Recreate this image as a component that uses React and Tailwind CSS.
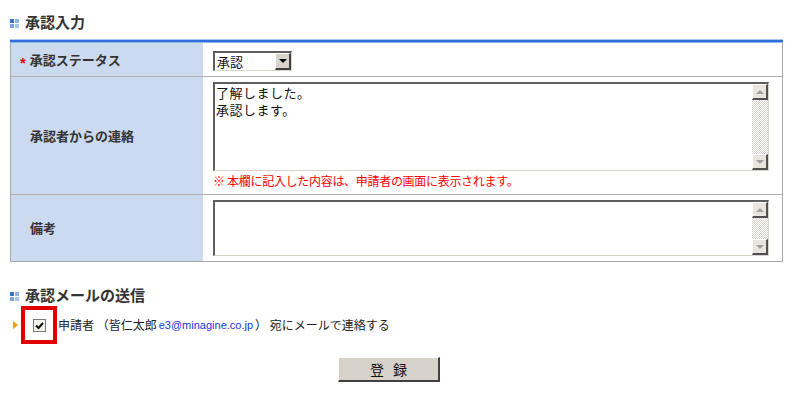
import React from "react";

function TitleIcon() {
  return (
    <div className="grid grid-cols-[4px_4px] grid-rows-[4px_4px] gap-[1px] w-[9px] h-[9px] mt-[2px]">
      <div className="bg-[#3572c4]" />
      <div className="bg-[#8fb4e2]" />
      <div className="bg-[#7aa5da]" />
      <div className="bg-[#a8c6ea]" />
    </div>
  );
}

function ScrollBtn({ up }) {
  return (
    <div className="w-[16px] h-[16px] shrink-0 bg-[#e8e5de] border-t border-l border-t-white border-l-white border-b-2 border-r-2 border-b-[#505050] border-r-[#505050] flex items-center justify-center">
      {up ? (
        <div className="w-0 h-0 border-x-[4px] border-x-transparent border-b-[4px] border-b-[#a0a0a0]" />
      ) : (
        <div className="w-0 h-0 border-x-[4px] border-x-transparent border-t-[4px] border-t-[#a0a0a0]" />
      )}
    </div>
  );
}

function Scrollbar() {
  return (
    <div className="flex flex-col w-[16px] h-full shrink-0">
      <ScrollBtn up />
      <div className="flex-1 bg-[repeating-conic-gradient(#d8d5ce_0%_25%,#ffffff_0%_50%)] bg-[length:2px_2px]" />
      <ScrollBtn />
    </div>
  );
}

function FakeTextarea({ h, text }) {
  return (
    <div
      className={`flex w-[556px] ${h} bg-white border-t-2 border-l-2 border-t-[#5e5e5e] border-l-[#5e5e5e] border-b border-r border-b-[#d8d4cc] border-r-[#d8d4cc]`}
    >
      <div className="flex-1 pl-[1px] text-[13px] leading-[17px] text-[#111] tracking-[0.5px] whitespace-pre-line">
        {text}
      </div>
      <Scrollbar />
    </div>
  );
}

export default function App() {
  return (
    <div className="w-[787px] h-[405px] bg-white font-['Noto_Sans_CJK_JP',sans-serif] text-[#222] overflow-hidden">
      <div className="pl-[10px] pt-[14px]">
        {/* Title 1 */}
        <div className="flex items-center h-[16px] gap-[6px]">
          <TitleIcon />
          <span className="text-[15px] leading-[16px] font-bold text-[#333]">承認入力</span>
        </div>

        {/* Blue line */}
        <div className="mt-[9px] w-[773px] flex flex-col">
          <div className="h-[1px] bg-[#a9c7f0]" />
          <div className="h-[2px] bg-[#2f6fdc]" />
          <div className="h-[1px] bg-[#8fb3ea]" />
        </div>

        {/* Table */}
        <div className="w-[773px] border-x border-b border-[#a8a8a8]">
          {/* Row 1 */}
          <div className="flex h-[34px] border-b border-[#b0b0b0]">
            <div className="w-[192px] shrink-0 bg-[#cbdaee] flex items-center pl-[9px]">
              <span className="font-['Liberation_Sans',Arial,sans-serif] text-[#e00000] text-[15px] font-bold leading-none mr-[4px] translate-y-[3px]">*</span>
              <span className="text-[13px] font-bold text-[#333]">承認ステータス</span>
            </div>
            <div className="flex-1 pl-[10px] pt-[8px]">
              <div className="flex w-[79px] h-[20px] bg-white border-t-2 border-l-2 border-t-[#5e5e5e] border-l-[#5e5e5e] border-b border-r border-b-[#d8d4cc] border-r-[#d8d4cc]">
                <div className="flex-1 pl-[2px] text-[13px] leading-[17px] text-[#111]">承認</div>
                <div className="w-[16px] h-full bg-[#d8d4cc] border-t border-l border-t-white border-l-white border-b-2 border-r-2 border-b-[#404040] border-r-[#404040] flex items-center justify-center">
                  <div className="w-0 h-0 border-x-[4px] border-x-transparent border-t-[4px] border-t-black" />
                </div>
              </div>
            </div>
          </div>

          {/* Row 2 */}
          <div className="flex h-[118px] border-b border-[#b0b0b0]">
            <div className="w-[192px] shrink-0 bg-[#cbdaee] flex items-center pl-[19px]">
              <span className="text-[13px] font-bold text-[#333]">承認者からの連絡</span>
            </div>
            <div className="flex-1 pl-[10px] pt-[5px]">
              <FakeTextarea h="h-[89px]" text={"了解しました。\n承認します。"} />
              <div className="mt-[2px] text-[12px] leading-[16px] text-[#ff0000] tracking-[-0.3px]">
                ※ 本欄に記入した内容は、申請者の画面に表示されます。
              </div>
            </div>
          </div>

          {/* Row 3 */}
          <div className="flex h-[66px]">
            <div className="w-[192px] shrink-0 bg-[#cbdaee] flex items-center pl-[19px]">
              <span className="text-[13px] font-bold text-[#333]">備考</span>
            </div>
            <div className="flex-1 pl-[10px] pt-[5px]">
              <FakeTextarea h="h-[56px]" text="" />
            </div>
          </div>
        </div>

        {/* Title 2 */}
        <div className="mt-[25px] flex items-center h-[16px] gap-[6px]">
          <TitleIcon />
          <span className="text-[15px] leading-[16px] font-bold text-[#333]">承認メールの送信</span>
        </div>

        {/* Checkbox row */}
        <div className="mt-[3px] flex items-center h-[38px]">
          <div className="ml-[3px] w-0 h-0 border-y-[4px] border-y-transparent border-l-[5px] border-l-[#ff9900]" />
          <div className="ml-[3px] w-[36px] h-[38px] border-4 border-[#e00000] flex items-center justify-center">
            <div className="w-[13px] h-[13px] border border-[#7a7a7a] bg-[#f3f3ee] flex items-center justify-center">
              <svg width="11" height="11" viewBox="0 0 11 11">
                <path d="M2 5.5 L4.5 8 L9 3" fill="none" stroke="#111" strokeWidth="2" />
              </svg>
            </div>
          </div>
          <div className="ml-[1px] text-[12px] leading-[16px] text-[#222] flex items-center whitespace-nowrap">
            <span>申請者 （皆仁太郎 </span>
            <span className="font-['Liberation_Sans',Arial,sans-serif] text-[11px] text-[#1a36e0] mx-[2px]">e3@minagine.co.jp</span>
            <span>） 宛にメールで連絡する</span>
          </div>
        </div>

        {/* Button */}
        <div className="mt-[13px] ml-[328px]">
          <button className="w-[102px] h-[25px] bg-[#d6d2ca] border-t border-l border-t-white border-l-white border-b-2 border-r-2 border-b-[#404040] border-r-[#404040] flex items-center justify-center gap-[9px] text-[14px] leading-none text-[#111]">
            <span>登</span>
            <span>録</span>
          </button>
        </div>
      </div>
    </div>
  );
}
